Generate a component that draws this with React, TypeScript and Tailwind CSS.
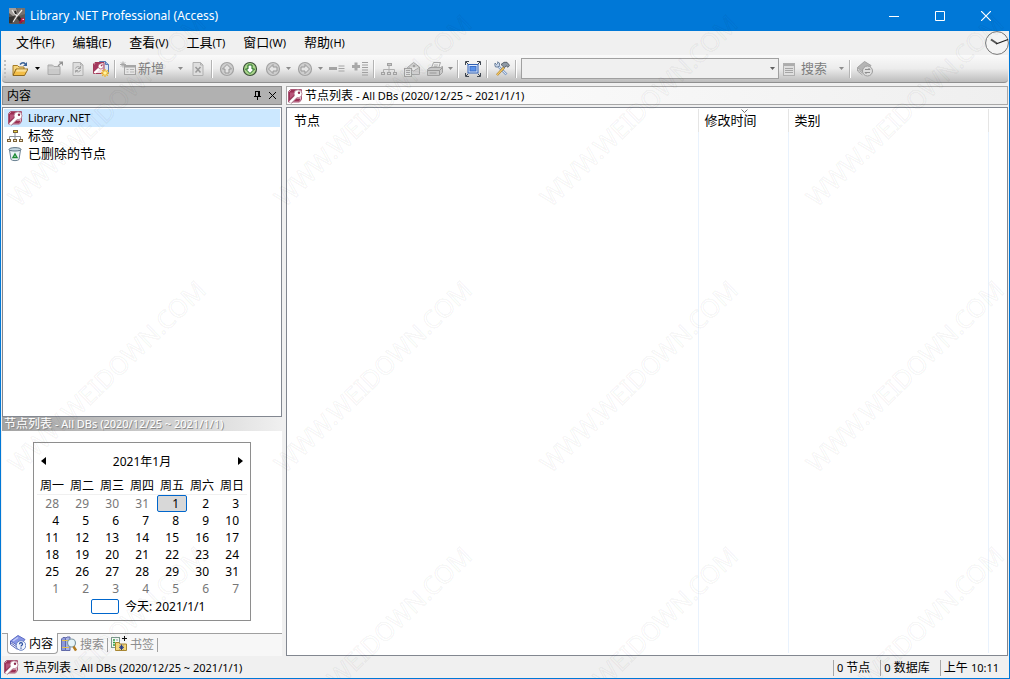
import type { ReactNode } from "react";

const MENUS = [
  { label: "文件", key: "(F)" },
  { label: "编辑", key: "(E)" },
  { label: "查看", key: "(V)" },
  { label: "工具", key: "(T)" },
  { label: "窗口", key: "(W)" },
  { label: "帮助", key: "(H)" },
];

const WEEKDAYS = ["周一", "周二", "周三", "周四", "周五", "周六", "周日"];

const WEEKS = [
  [28, 29, 30, 31, 1, 2, 3],
  [4, 5, 6, 7, 8, 9, 10],
  [11, 12, 13, 14, 15, 16, 17],
  [18, 19, 20, 21, 22, 23, 24],
  [25, 26, 27, 28, 29, 30, 31],
  [1, 2, 3, 4, 5, 6, 7],
];

const Icon = ({ children, size = 16 }: { children: ReactNode; size?: number }) => (
  <svg width={size} height={size} viewBox="0 0 16 16" fill="none" className="shrink-0" aria-hidden="true">
    {children}
  </svg>
);

const AppIcon = () => (
  <Icon>
    <rect width="16" height="16" rx="1" fill="#5d5856" />
    <path d="M0 0h7l2 6-5 2-4-3z" fill="#a19c99" />
    <path d="M8 0h8v6l-6 2z" fill="#77716e" />
    <path d="M3 2l2 3 3 3M13 2L8 8l-4 6" stroke="#efecea" strokeWidth="1.200" />
    <path d="M0 9l6-1-3 7H0z" fill="#353231" />
    <path d="M9 9l4 5" stroke="#2b2a2a" strokeWidth="3" />
    <path d="M6 3l1 3" stroke="#252424" strokeWidth="2" />
    <path d="M10.500 15l3-3" stroke="#a3123b" strokeWidth="2" />
    <circle cx="13.800" cy="11.800" r="2" fill="#b81a46" />
    <circle cx="14.200" cy="11.400" r=".7" fill="#fff" />
  </Icon>
);

const AccessIcon = () => (
  <Icon>
    <path d="M3.500 1.500h11v10l-2 2.500H1.500V3.500z" fill="#f7eaef" stroke="#a95574" />
    <path d="M2 4l2-2h8L9 5l-2 5-5 3.500z" fill="#9c3055" />
    <path d="M3 4.500h4.500l-1 3-3.500 3z" fill="#b9557a" />
    <path d="M3 14.500L9.500 8" stroke="#9a6177" strokeWidth="3.800" />
    <circle cx="11" cy="5.800" r="4" fill="#fff" stroke="#ae7088" strokeWidth=".8" />
    <path d="M3 14.300L10 7.300" stroke="#fff" strokeWidth="2.400" />
    <path d="M6.500 13.500l3-3h4v1l-1.500 2z" fill="#9c3055" />
    <circle cx="12" cy="4.800" r="1.200" fill="#8f2c4e" />
  </Icon>
);

const OpenFolderIcon = () => (
  <Icon>
    <path d="M1 14V4.500h4.500L7 6h5v2" fill="#f7d57c" stroke="#a67c26" />
    <path d="M1 14.500L4 8h12l-3.500 6.500z" fill="#f3bd46" stroke="#8e681e" />
    <path d="M4.800 9h10M4.200 10h10" stroke="#fdeab0" />
    <path d="M8 3.500c2-2.500 4-2 5.500-.5" stroke="#3a6296" strokeWidth="1.300" />
    <path d="M15 1v4h-4z" fill="#3a6296" />
  </Icon>
);

const FolderUpIcon = () => (
  <Icon>
    <path d="M1 13.500V4h4.500L7 5.500h6v8z" fill="#cacaca" stroke="#aaa" />
    <path d="M1.500 7h11" stroke="#dcdcdc" />
    <path d="M11 5l4-4M12 1h3.500v3.500" stroke="#949494" strokeWidth="1.200" />
  </Icon>
);

const RefreshPageIcon = () => (
  <Icon>
    <path d="M3 1.500h7.500l2.500 2.500v10.500H3z" fill="#dedede" stroke="#b0b0b0" />
    <path d="M10.500 1.500V4H13" stroke="#b0b0b0" />
    <path d="M5.500 7.500c.5-2 3-2.500 4.500-1M10.500 9c-.5 2-3 2.500-4.500 1" stroke="#a0a0a0" />
    <path d="M10.500 5v2.500H8M5.500 11.500V9.500H8" stroke="#a0a0a0" />
  </Icon>
);

const NewDatabaseIcon = () => (
  <Icon>
    <path d="M6.500 .5h6l3 3v9h-9z" fill="#dbe7f9" stroke="#5b7cb5" />
    <path d="M12.500 .5v3h3" fill="#9db9e6" stroke="#5b7cb5" />
    <path d="M2 1.500h9v9L9.500 12.500H.5V3z" fill="#f3dce4" stroke="#a33a58" />
    <path d="M1 3.500L2.500 2H8L5 8l-4 3z" fill="#a4385f" />
    <path d="M1.500 12l5-5" stroke="#fff" strokeWidth="2.200" />
    <circle cx="7.800" cy="5.300" r="2.600" fill="#fff" stroke="#a33a58" strokeWidth=".6" />
    <circle cx="8.500" cy="4.600" r=".8" fill="#a33a58" />
    <path d="M12 8v8M8 12h8M9.200 9.200l5.600 5.600M14.800 9.200l-5.600 5.600" stroke="#eeb62a" strokeWidth="1.300" />
    <circle cx="12" cy="12" r="1.800" fill="#fff3a3" />
  </Icon>
);

const NewNodeIcon = () => (
  <Icon>
    <path d="M3 .5v6M0 3.500h6M1 1.500l4 4M5 1.500l-4 4" stroke="#a6a6a6" />
    <rect x="4.500" y="4.500" width="11" height="9" fill="#e6e6e6" stroke="#a6a6a6" />
    <path d="M5 5.500h10" stroke="#a6a6a6" strokeWidth="2" />
    <path d="M6.500 8.500h2M10 8.500h4M6.500 11h2M10 11h4" stroke="#b5b5b5" />
  </Icon>
);

const DeletePageIcon = () => (
  <Icon>
    <path d="M3 1.500h7.500l2.500 2.500v10.500H3z" fill="#dedede" stroke="#b0b0b0" />
    <path d="M10.500 1.500V4H13" stroke="#b0b0b0" />
    <path d="M5.500 6l5 5.500M10.500 6l-5 5.500" stroke="#999" strokeWidth="1.500" />
  </Icon>
);

const ARROWS = {
  up: "M8 3.500L12.500 8H10v4H6V8H3.500z",
  down: "M8 12.500L3.500 8H6V4h4v4h2.500z",
  left: "M3.500 8L8 3.500V6h4v4H8v2.500z",
  right: "M12.500 8L8 12.500V10H4V6h4V3.500z",
};

const ArrowIcon = ({ dir, active }: { dir: keyof typeof ARROWS; active?: boolean }) => (
  <Icon>
    <circle cx="8" cy="8" r="6.500" fill={active ? "#a9d58b" : "#cecece"} stroke={active ? "#3b4f38" : "#a2a2a2"} strokeWidth="1.200" />
    <path d={ARROWS[dir]} fill={active ? "#fff" : "#e4e4e4"} stroke={active ? "#1f6b20" : "#989898"} />
  </Icon>
);

const CollapseIcon = () => (
  <Icon>
    <path d="M0 7.500h8" stroke="#a4a4a4" strokeWidth="3" />
    <path d="M9.500 5h6M9.500 7.500h6M9.500 10h6" stroke="#a4a4a4" />
  </Icon>
);

const ExpandIcon = () => (
  <Icon>
    <path d="M0 5.500h8M4 1.500v8" stroke="#a8a8a8" strokeWidth="3" />
    <path d="M10 1.500h6M10 4h6M10 6.500h6M10 9h6M10 11.500h6M10 14h6" stroke="#a0a0a0" />
  </Icon>
);

const TreeIcon = ({ line, box, top, fill }: { line: string; box: string; top: string; fill: string }) => (
  <Icon>
    <path d="M8 5v6M2.500 11V8.500h11V11" stroke={line} />
    <rect x="6.500" y="2.500" width="4" height="2" fill={top} stroke={box} />
    <rect x=".5" y="11.500" width="3" height="2" fill={fill} stroke={box} />
    <rect x="6.500" y="11.500" width="3" height="2" fill={fill} stroke={box} />
    <rect x="12.500" y="11.500" width="3" height="2" fill={fill} stroke={box} />
  </Icon>
);

const MailHouseIcon = () => (
  <Icon>
    <path d="M3.500 6.500l6-5 6 4.500v7.500h-12z" fill="#cfcfcf" stroke="#a6a6a6" />
    <path d="M5 6.500l4.500 3.500L15 6.500" fill="#ececec" stroke="#adadad" />
    <rect x=".5" y="7.500" width="7" height="8" fill="#e0e0e0" stroke="#a2a2a2" />
    <path d="M2 9.500h4M2 11.500h4M2 13.500h4" stroke="#a8a8a8" />
    <circle cx="10" cy="5" r="1.300" fill="#a2a2a2" />
  </Icon>
);

const PrinterIcon = () => (
  <Icon>
    <path d="M4.500 7l2-5.500h7L11.500 7z" fill="#eee" stroke="#a6a6a6" />
    <path d="M.5 8.500L3 6.500h10.500l2-1v6l-3 3H.5z" fill="#c8c8c8" stroke="#a0a0a0" />
    <path d="M1 9.500h11.500L15 7M12.500 9.500V14M2.500 12h7" stroke="#989898" />
    <path d="M7 4h4M6.500 5.500h4" stroke="#b5b5b5" />
  </Icon>
);

const FullScreenIcon = () => (
  <Icon>
    <rect x="3" y="3.500" width="10" height="8.500" fill="#dce9fc" stroke="#2f5fb3" />
    <rect x="5" y="5.500" width="6" height="4.500" fill="#5a93ea" stroke="#3d6fc7" />
    <path d="M.5 4V.5H4M12 .5h3.500V4M15.500 12v3.500H12M4 15.500H.5V12" stroke="#3f4650" />
    <path d="M1 1l2 2M15 1l-2 2M1 15l2-2M15 15l-2-2" stroke="#3f4650" />
  </Icon>
);

const ToolsIcon = () => (
  <Icon>
    <path d="M4.500 5.500l8 8" stroke="#4a6da0" strokeWidth="2.400" />
    <path d="M4.500 5.500l8 8" stroke="#d4e2f5" strokeWidth="1.200" />
    <path d="M1 2l1.500 1.500L4 2 3.500 .8 5.500 2v2.500L4 6H1.500L.8 4z" fill="#c6d5ea" stroke="#4a6280" strokeWidth=".7" />
    <path d="M10 6.500L3 14" stroke="#a5741c" strokeWidth="2.400" />
    <path d="M10 6.500L3 14" stroke="#f2c968" strokeWidth="1.200" />
    <path d="M7 3.500l3-2.200h3l2.500 3-1.500 2-2-1.500-1.500 2z" fill="#8e99a5" stroke="#3b444e" strokeWidth=".7" />
  </Icon>
);

const ListIcon = () => (
  <Icon>
    <rect x="2.500" y="2.500" width="11" height="12" fill="#dfdfdf" stroke="#b0b0b0" />
    <path d="M3 4h10" stroke="#adadad" strokeWidth="2" />
    <path d="M4 7.500h8M4 9.500h8M4 11.500h8" stroke="#a6a6a6" />
  </Icon>
);

const SyncBookIcon = () => (
  <Icon>
    <path d="M.5 6.500L7.500 .5l6.500 4L7 12z" fill="#b5b5b5" stroke="#a2a2a2" />
    <path d="M.5 6.500V10l5 4M.5 8.500l5 3.500" stroke="#a6a6a6" />
    <circle cx="10.500" cy="10" r="5" fill="#dedede" stroke="#9c9c9c" />
    <path d="M8 8.500h5L11.500 7M13 11.500H8L9.500 13" stroke="#8e8e8e" />
  </Icon>
);

const RecycleIcon = () => (
  <Icon>
    <path d="M2.500 4l1.500 9.500c1 1.500 7 1.500 8 0L13.500 4z" fill="#eaf2f6" stroke="#6a8192" />
    <path d="M2 3.500c0-2.500 12-2.500 12 0 0 2-12 2-12 0z" fill="#c3d5e0" stroke="#5c7283" />
    <path d="M8 8l2 3.500H6z" stroke="#1c8a34" strokeWidth="1.400" />
  </Icon>
);

const HelpBookIcon = () => (
  <Icon>
    <path d="M.5 6L8 .5l7 4-6 7z" fill="#8795e6" stroke="#5e6dc4" />
    <path d="M.5 6v3.500l7 5M.5 7.500l7 5" stroke="#5362b8" />
    <path d="M3 6l5-3.500" stroke="#c3ccf8" strokeWidth="1.500" />
    <circle cx="11" cy="10.500" r="4.800" fill="#eef3fd" stroke="#6c86c6" />
    <path d="M9.500 9.200c0-2 3-2 3 0 0 1-1.500 1-1.500 2.300M11 12.500v1.200" stroke="#254b9e" strokeWidth="1.200" />
  </Icon>
);

const SearchBooksIcon = () => (
  <Icon>
    <path d="M.5 3l1.500-1.500h2.500v13h-4z" fill="#8d98d8" stroke="#6069a8" />
    <path d="M4.500 2.500L6 1h3v13.500H4.500z" fill="#a9b3ea" stroke="#6069a8" />
    <path d="M1 11.500h7M1 4.500h7" stroke="#e5c04b" />
    <circle cx="10.500" cy="7" r="4" fill="#e6f3f7" stroke="#7f98a2" strokeWidth="1.200" />
    <path d="M12.500 10.500l2.500 4" stroke="#b37a1e" strokeWidth="2.400" />
  </Icon>
);

const BookmarkIcon = () => (
  <Icon>
    <rect x=".5" y="1.500" width="8" height="10" fill="#f5faf5" stroke="#7d998f" />
    <path d="M2 4h2M2 6.500h2M2 9h2" stroke="#2ea043" strokeWidth="1.500" />
    <path d="M5 4h2M5 6.500h2" stroke="#8ba1a8" />
    <path d="M13.500 0v5M11 2.500h5" stroke="#111" />
    <path d="M4.500 14.500v-8H8L9 8h6.500v6.500z" fill="#f4d77b" stroke="#a88632" />
    <path d="M10.500 8.500v5.500M8 11.300h5M8.700 9.500l3.600 3.600M12.300 9.500l-3.600 3.600" stroke="#253c8c" />
  </Icon>
);

const ToolButton = ({ label, children, disabled }: { label: string; children: ReactNode; disabled?: boolean }) => (
  <button type="button" aria-label={label} disabled={disabled} className="flex h-6 w-[23px] shrink-0 items-center justify-center">
    {children}
  </button>
);

const Caret = ({ label, dark, wide }: { label: string; dark?: boolean; wide?: boolean }) => (
  <button
    type="button"
    aria-label={label}
    className={`flex h-6 shrink-0 items-center justify-center ${wide ? "w-3" : "w-[9px]"}`}
  >
    <svg width="5" height="3" aria-hidden="true">
      <path d="M0 0h5L2.500 3z" fill={dark ? "#000" : "#8c8c8c"} />
    </svg>
  </button>
);

const Separator = () => (
  <div className="flex w-1.5 shrink-0 justify-center">
    <div className="h-[18px] w-px bg-[#b4b4b4]" />
    <div className="h-[18px] w-px bg-white" />
  </div>
);

const RangeText = () => (
  <span className="whitespace-nowrap pt-0.5 text-[11px]">
    <span className="text-xs">节点列表</span> - All DBs (2020/12/25 ~ 2021/1/1)
  </span>
);

const TitleBar = () => (
  <header className="flex h-[31px] shrink-0 items-center bg-[#0078d7] pl-2 text-white">
    <AppIcon />
    <h1 className="pl-[5px] text-xs">Library .NET Professional (Access)</h1>
    <div className="ml-auto flex h-full">
      <button type="button" aria-label="最小化" className="flex w-[46px] items-center justify-center">
        <svg width="10" height="10" stroke="#fff"><path d="M0 5.500h10" /></svg>
      </button>
      <button type="button" aria-label="最大化" className="flex w-[46px] items-center justify-center">
        <svg width="10" height="10" fill="none" stroke="#fff"><path d="M.5 .5h9v9h-9z" /></svg>
      </button>
      <button type="button" aria-label="关闭" className="flex w-[46px] items-center justify-center">
        <svg width="10" height="10" stroke="#fff" strokeWidth="1.200"><path d="M0 0l10 10M10 0L0 10" /></svg>
      </button>
    </div>
  </header>
);

const MenuBar = () => (
  <nav className="flex h-6 shrink-0 items-center gap-[18px] pl-[15px]">
    {MENUS.map((menu) => (
      <button key={menu.label} type="button" className="flex items-center text-[13px]">
        {menu.label}
        <span className="text-[11px]">{menu.key}</span>
      </button>
    ))}
    <svg width="24" height="24" fill="none" className="ml-auto" aria-hidden="true">
      <circle cx="12" cy="12" r="11.400" fill="#f4f4f4" stroke="#777" />
      <path d="M6 8.500l6 4" stroke="#555" strokeWidth="2" />
      <path d="M11 13l12-4.500" stroke="#222" strokeWidth="1.300" />
    </svg>
  </nav>
);

const Toolbar = () => (
  <div className="mx-px flex h-7 shrink-0 items-center rounded-b border-b border-[#8f8f8f] bg-linear-to-b from-[#fafafa] via-[#ececec] to-[#bcbcbc]">
    <div className="flex w-1.5 shrink-0 flex-col items-center gap-0.5">
      {[0, 1, 2, 3, 4].map((dot) => (
        <div key={dot} className="size-0.5 bg-[#c0c0c0]" />
      ))}
    </div>
    <ToolButton label="打开"><OpenFolderIcon /></ToolButton>
    <Caret label="打开选项" dark wide />
    <ToolButton label="关闭数据库" disabled><FolderUpIcon /></ToolButton>
    <ToolButton label="刷新" disabled><RefreshPageIcon /></ToolButton>
    <ToolButton label="新建数据库"><NewDatabaseIcon /></ToolButton>
    <Separator />
    <button type="button" disabled className="flex w-14 shrink-0 items-center gap-0.5 pl-0.5 text-[13px] text-[#7d7d7d]">
      <NewNodeIcon />
      <span className="whitespace-nowrap">新增</span>
    </button>
    <Caret label="新增选项" wide />
    <ToolButton label="删除" disabled><DeletePageIcon /></ToolButton>
    <Separator />
    <ToolButton label="上移" disabled><ArrowIcon dir="up" /></ToolButton>
    <ToolButton label="下移"><ArrowIcon dir="down" active /></ToolButton>
    <ToolButton label="后退" disabled><ArrowIcon dir="left" /></ToolButton>
    <Caret label="后退选项" />
    <ToolButton label="前进" disabled><ArrowIcon dir="right" /></ToolButton>
    <Caret label="前进选项" />
    <ToolButton label="折叠" disabled><CollapseIcon /></ToolButton>
    <ToolButton label="展开" disabled><ExpandIcon /></ToolButton>
    <Separator />
    <ToolButton label="结构" disabled><TreeIcon line="#b0b0b0" box="#a2a2a2" top="#c8c8c8" fill="#d8d8d8" /></ToolButton>
    <ToolButton label="发送" disabled><MailHouseIcon /></ToolButton>
    <ToolButton label="打印" disabled><PrinterIcon /></ToolButton>
    <Caret label="打印选项" />
    <Separator />
    <ToolButton label="全屏"><FullScreenIcon /></ToolButton>
    <Separator />
    <ToolButton label="选项"><ToolsIcon /></ToolButton>
    <Separator />
    <div className="relative ml-0.5">
      <select aria-label="搜索内容" disabled className="block h-[21px] w-[258px] appearance-none border border-[#a0a0a0] bg-[#f0f0f0] opacity-100" />
      <svg width="5" height="3" className="absolute top-[9px] right-1" aria-hidden="true">
        <path d="M0 0h5L2.500 3z" fill="#606060" />
      </svg>
    </div>
    <button type="button" disabled className="flex w-14 shrink-0 items-center gap-1 pl-0.5 text-[13px] text-[#7d7d7d]">
      <ListIcon />
      <span className="whitespace-nowrap">搜索</span>
    </button>
    <Caret label="搜索选项" wide />
    <Separator />
    <ToolButton label="同步" disabled><SyncBookIcon /></ToolButton>
  </div>
);

const Calendar = () => (
  <div className="mx-auto w-[218px] border border-[#8e8e8e] px-[3px] text-xs">
    <div className="flex h-[33px] items-center justify-between px-1 pt-1">
      <button type="button" aria-label="上个月">
        <svg width="5" height="8"><path d="M5 0v8L0 4z" /></svg>
      </button>
      <span className="pt-0.5">2021年1月</span>
      <button type="button" aria-label="下个月">
        <svg width="5" height="8"><path d="M0 0v8l5-4z" /></svg>
      </button>
    </div>
    <table className="w-full table-fixed border-collapse">
      <thead>
        <tr className="h-[19px] border-b border-[#f0f0f0]">
          {WEEKDAYS.map((day) => (
            <th key={day} className="p-0 pt-0.5 font-normal leading-4">{day}</th>
          ))}
        </tr>
      </thead>
      <tbody>
        {WEEKS.map((week, row) => (
          <tr key={row} className="h-[17px]">
            {week.map((day, col) => {
              const outside = (row === 0 && day > 20) || row === 5;
              const today = row === 0 && day === 1;
              return (
                <td key={col} className="p-0">
                  <button
                    type="button"
                    className={`flex h-[17px] w-full items-center justify-end rounded-xs border pr-[7px] ${
                      today ? "border-[#0066cc] bg-[#d8d8d8]" : "border-transparent"
                    } ${outside ? "text-[#777]" : ""}`}
                  >
                    {day}
                  </button>
                </td>
              );
            })}
          </tr>
        ))}
      </tbody>
    </table>
    <button type="button" className="mb-1 ml-[54px] flex h-[19px] items-center gap-1.5">
      <span className="h-[15px] w-7 rounded-xs border border-[#0066cc]" />
      今天: 2021/1/1
    </button>
  </div>
);

const Sidebar = () => (
  <aside className="flex w-[281px] shrink-0 flex-col pl-px">
    <div className="flex h-[19px] shrink-0 items-center border border-[#8c8c8c] bg-[#b1b1b1] px-1">
      <h2 className="text-xs">内容</h2>
      <div className="ml-auto flex items-center gap-1.5">
        <button type="button" aria-label="固定">
          <svg width="9" height="9" fill="none" stroke="#000"><path d="M2.500 0v5.500M2 .5h5M1 5.500h7M4.500 6v3" /><path d="M6 0v5.500" strokeWidth="2" /></svg>
        </button>
        <button type="button" aria-label="关闭面板">
          <svg width="9" height="9" stroke="#000"><path d="M1 1l7 7M8 1L1 8" /></svg>
        </button>
      </div>
    </div>
    <ul className="mt-0.5 flex-1 border border-[#828790] bg-white p-px text-[13px]">
      <li>
        <button type="button" className="flex h-[18px] w-full items-center gap-[5px] bg-[#cce8ff] pl-[3px] text-[11px]">
          <AccessIcon />
          Library .NET
        </button>
      </li>
      <li>
        <button type="button" className="flex h-[18px] w-full items-center gap-[5px] pl-[3px]">
          <TreeIcon line="#8a8f98" box="#7c6238" top="#e8d33c" fill="#f6ead0" />
          标签
        </button>
      </li>
      <li>
        <button type="button" className="flex h-[18px] w-full items-center gap-[5px] pl-[3px]">
          <RecycleIcon />
          已删除的节点
        </button>
      </li>
    </ul>
    <div className="flex h-3.5 shrink-0 items-center bg-linear-to-r from-[#a3a3a3] to-[#f0f0f0] pl-0.5 text-white [text-shadow:1px_1px_0_#8a8a8a]">
      <RangeText />
    </div>
    <div className="bg-white pt-[11px] pb-3">
      <Calendar />
    </div>
    <div role="tablist" className="flex h-[23px] shrink-0 items-start border-t border-[#a0a0a0] bg-[#f7f7f7] pl-[5px] text-xs text-[#8c8c8c]">
      <button type="button" role="tab" aria-selected="true" className="-mt-px flex h-[21px] items-center gap-[3px] rounded-b border border-t-0 border-[#a0a0a0] bg-white pr-1 pl-0.5 text-black">
        <HelpBookIcon />
        <span className="pt-0.5">内容</span>
      </button>
      <button type="button" role="tab" aria-selected="false" className="flex h-5 items-center gap-[3px] px-[3px]">
        <SearchBooksIcon />
        <span className="pt-0.5">搜索</span>
      </button>
      <div className="mt-1 h-3.5 w-px bg-[#a0a0a0]" />
      <button type="button" role="tab" aria-selected="false" className="flex h-5 items-center gap-[3px] px-[3px]">
        <BookmarkIcon />
        <span className="pt-0.5">书签</span>
      </button>
      <div className="mt-1 h-3.5 w-px bg-[#a0a0a0]" />
    </div>
  </aside>
);

const NodeList = () => (
  <main className="flex min-w-0 flex-1 flex-col pr-px">
    <div className="flex h-[19px] shrink-0 items-center gap-0.5 border border-[#a8a8a8] bg-linear-to-r from-white to-[#efefef]">
      <AccessIcon />
      <RangeText />
    </div>
    <div className="mt-0.5 flex flex-1 border border-[#828790] bg-white p-px pb-0.5">
      <table className="w-full table-fixed border-collapse text-[13px]">
        <colgroup>
          <col className="w-[410px]" />
          <col className="w-[90px]" />
          <col className="w-[200px]" />
          <col />
        </colgroup>
        <thead>
          <tr className="h-[23px] text-left">
            <th className="border-r border-[#e5e5e5] px-1.5 py-0 font-normal">节点</th>
            <th className="relative border-r border-[#e5e5e5] px-1.5 py-0 font-normal">
              修改时间
              <svg width="7" height="4" fill="none" stroke="#777" className="absolute top-0 left-[42px]" aria-hidden="true">
                <path d="M.5 .5l3 3 3-3" />
              </svg>
            </th>
            <th className="border-r border-[#e5e5e5] px-1.5 py-0 font-normal">类别</th>
            <td />
          </tr>
        </thead>
        <tbody>
          <tr>
            <td className="border-r border-[#e9f2fd]" />
            <td className="border-r border-[#e9f2fd]" />
            <td className="border-r border-[#e9f2fd]" />
            <td />
          </tr>
        </tbody>
      </table>
    </div>
  </main>
);

const StatusBar = () => (
  <footer className="flex h-[22px] shrink-0 items-center gap-1 pl-0.5 text-xs">
    <AccessIcon />
    <RangeText />
    <div className="ml-auto flex items-center pt-px">
      <span className="border-l border-[#a8a8a8] pr-2.5 pl-[3px]"><span className="text-[11px]">0</span> 节点</span>
      <span className="border-l border-[#a8a8a8] pr-2.5 pl-[3px]"><span className="text-[11px]">0</span> 数据库</span>
      <span className="border-l border-[#a8a8a8] pr-2.5 pl-[3px]">上午 <span className="text-[11px]">10:11</span></span>
    </div>
  </footer>
);

const Watermark = () => (
  <svg className="pointer-events-none absolute inset-0 size-full" aria-hidden="true">
    {[208, 474, 740].map((y) =>
      [18, 284, 550, 816].map((x) => (
        <text
          key={`${x}-${y}`}
          transform={`translate(${x} ${y}) rotate(-44)`}
          fill="none"
          stroke="#000"
          strokeOpacity="0.04"
          strokeWidth="1.500"
          fontSize="25"
        >
          WWW.WEIDOWN.COM
        </text>
      )),
    )}
  </svg>
);

const App = () => {
  return (
    <div className="relative flex h-screen flex-col overflow-hidden border border-t-0 border-[#0078d7] bg-[#f0f0f0] font-['Noto_Sans','Noto_Sans_CJK_SC',sans-serif] text-black">
      <TitleBar />
      <MenuBar />
      <Toolbar />
      <div className="flex min-h-0 flex-1 gap-1 pt-[3px]">
        <Sidebar />
        <NodeList />
      </div>
      <StatusBar />
      <Watermark />
    </div>
  );
};

export default App;
